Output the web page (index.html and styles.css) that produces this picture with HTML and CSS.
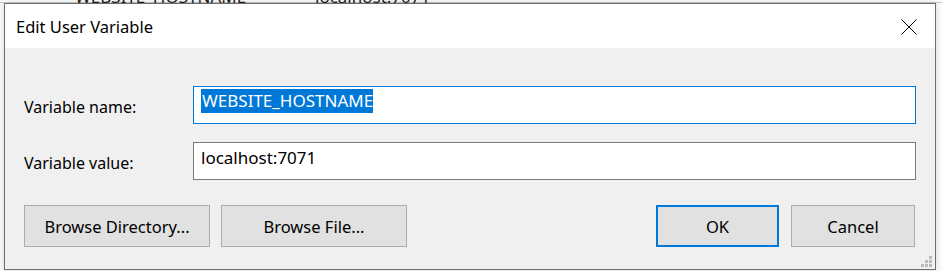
FILE: index.html
```html
<!DOCTYPE html>
<html lang="en">

<head>
    <meta charset="UTF-8">
    <meta name="viewport" content="width=device-width, initial-scale=1.0">
    <title>Edit User Variable</title>
    <link rel="stylesheet" href="styles.css">
</head>

<body>
    <div class="desk">
        <!-- the environment variables list behind the dialog -->
        <div class="behind">
            <span class="behind-name">WEBSITE_HOSTNAME</span>
            <span class="behind-value">localhost:7071</span>
        </div>

        <div class="dialog">
            <div class="titlebar">
                <span class="title">Edit User Variable</span>
                <button class="close" title="Close">
                    <svg width="16" height="16" viewBox="0 0 16 16">
                        <path d="M0.5 0.5 L15.5 15.5 M15.5 0.5 L0.5 15.5" stroke="#000" stroke-width="1" fill="none" />
                    </svg>
                </button>
            </div>

            <div class="content">
                <div class="fields">
                    <label class="label" for="varname">Variable name:</label>
                    <div class="input focused" id="varname"><span class="sel">WEBSITE_HOSTNAME</span></div>

                    <label class="label" for="varvalue">Variable value:</label>
                    <div class="input" id="varvalue">localhost:7071</div>
                </div>

                <div class="buttons">
                    <div class="group">
                        <button class="btn wide">Browse Directory...</button>
                        <button class="btn wide">Browse File...</button>
                    </div>
                    <div class="group right">
                        <button class="btn default">OK</button>
                        <button class="btn cancel">Cancel</button>
                    </div>
                </div>

                <svg class="grip" width="12" height="12" viewBox="0 0 12 12">
                    <rect x="8" y="0" width="3" height="3" fill="#bcbcbc" />
                    <rect x="4" y="4" width="3" height="3" fill="#bcbcbc" />
                    <rect x="8" y="4" width="3" height="3" fill="#bcbcbc" />
                    <rect x="0" y="8" width="3" height="3" fill="#bcbcbc" />
                    <rect x="4" y="8" width="3" height="3" fill="#bcbcbc" />
                    <rect x="8" y="8" width="3" height="3" fill="#bcbcbc" />
                </svg>
            </div>
        </div>
    </div>
</body>

</html>
```

FILE: styles.css
```css
* {
    margin: 0px;
    padding: 0px;
    box-sizing: border-box;
}

body {
    width: 942px;
    height: 271px;
    overflow: hidden;
    background-color: #ffffff;
    font-family: "Noto Sans", "Open Sans", sans-serif;
    font-size: 16px;
    color: #000;
}

.desk {
    position: relative;
    height: 271px;
    padding: 3px 0 0 4px;
    background-color: #fbfbfb;
}

.behind {
    position: absolute;
    top: -14px;
    left: 0;
    width: 942px;
    height: 17px;
    border-bottom: 1px solid #c8c8c8;
    font-size: 17px;
    line-height: 22px;
    color: #222;
}

.behind-name {
    position: absolute;
    left: 75px;
}

.behind-value {
    position: absolute;
    left: 315px;
}

.dialog {
    position: relative;
    width: 932px;
    height: 267px;
    border: 1px solid #6e6e6e;
    background-color: #f0f0f0;
    display: flex;
    flex-direction: column;
    box-shadow: 0 0 6px rgba(0, 0, 0, 0.15);
}

.titlebar {
    height: 44px;
    background-color: #ffffff;
    display: flex;
    align-items: center;
    justify-content: space-between;
    padding-left: 11px;
}

.title {
    font-size: 16.5px;
    padding-top: 1px;
}

.close {
    width: 46px;
    height: 44px;
    border: none;
    background: transparent;
    display: flex;
    align-items: center;
    justify-content: center;
    margin-right: 3px;
    padding-top: 2px;
}

.content {
    position: relative;
    flex: 1;
    padding: 38px 19px 0 19px;
}

.fields {
    display: grid;
    grid-template-columns: 169px 1fr;
    row-gap: 18px;
    align-items: center;
}

.label {
    padding-top: 4px;
    padding-left: 0px;
}

.input {
    height: 38px;
    background-color: #ffffff;
    border: 1px solid #7a7a7a;
    padding: 3px 0 0 7px;
    font-size: 17px;
    line-height: 24px;
}

.input.focused {
    border-color: #0078d7;
    padding-top: 2px;
}

.sel {
    display: inline-block;
    background-color: #0078d7;
    color: #ffffff;
    height: 24px;
    line-height: 24px;
    padding-left: 1px;
}

.buttons {
    display: flex;
    justify-content: space-between;
    margin-top: 25px;
    padding-right: 1px;
}

.group {
    display: flex;
    gap: 11px;
}

.group.right {
    gap: 12px;
}

.btn {
    width: 123px;
    height: 42px;
    background-color: #e1e1e1;
    border: 1px solid #adadad;
    font-family: "Noto Sans", "Open Sans", sans-serif;
    font-size: 16.5px;
    color: #000;
}

.btn.wide {
    width: 186px;
}

.btn.cancel {
    width: 124px;
}

.btn.default {
    border: 2px solid #0078d7;
}

.grip {
    position: absolute;
    right: 2px;
    bottom: 1px;
}
```
